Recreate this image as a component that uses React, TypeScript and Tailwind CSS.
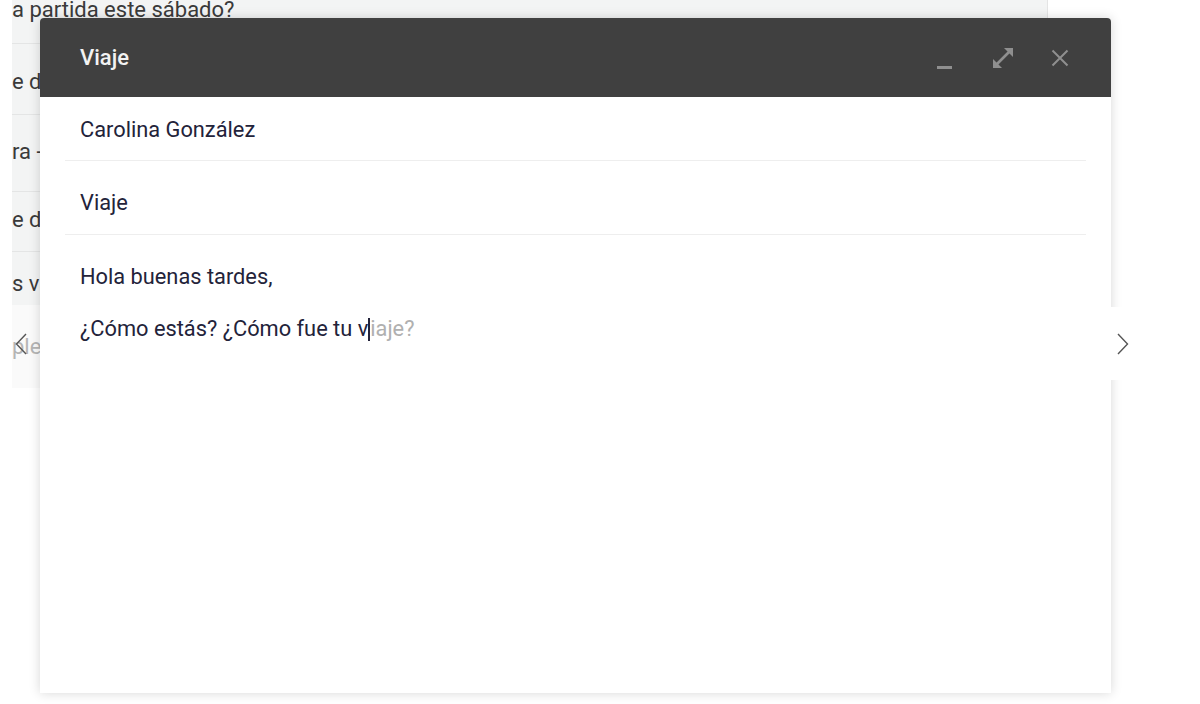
import React from 'react';

const rows = [
  { text: 'a partida este sábado?', h: 'h-[44px] items-start', off: '-mt-[3px]' },
  { text: 'e de la reunión', h: 'h-[71px] items-center', off: 'mt-[6px]' },
  { text: 'ra - informe', h: 'h-[77px] items-center', off: '-mt-[3px]' },
  { text: 'e de compras', h: 'h-[60px] items-center', off: '-mt-[3px]' },
  { text: 's vacaciones', h: 'h-[53px] items-center border-b-0', off: 'mt-[10px]' },
];

const Chevron = ({ dir }: { dir: 'left' | 'right' }) => (
  <svg width="12" height="22" viewBox="0 0 12 22" fill="none" stroke="#555" strokeWidth="1.4">
    {dir === 'left' ? <polyline points="11,1 1.5,11 11,21" /> : <polyline points="1,1 10.5,11 1,21" />}
  </svg>
);

export default function App() {
  return (
    <div className="relative h-[704px] w-[1200px] overflow-hidden bg-white font-['Roboto',sans-serif]">
      {/* inbox behind the compose window */}
      <div className="ml-[12px] w-[1036px] border-r border-[#e4e4e4] bg-[#f3f4f4]">
        {rows.map((r, i) => (
          <div key={i} className={`flex border-b border-[#e4e5e5] text-[22px] leading-[26px] text-[#3a3a3a] ${r.h}`}>
            <span className={r.off}>{r.text}</span>
          </div>
        ))}
        <div className="flex h-[83px] items-center bg-[#fafafa] text-[22px] text-[#b5b5b5]">
          <span className="relative">
            ple
            <span className="absolute left-[3px] top-[3px]">
              <Chevron dir="left" />
            </span>
          </span>
        </div>
      </div>

      {/* compose window */}
      <div className="absolute left-[40px] top-[18px] flex h-[675px] w-[1071px] flex-col rounded-t-[4px] bg-white shadow-[0_0_12px_rgba(0,0,0,0.16)]">
        <div className="flex h-[79px] items-center justify-between rounded-t-[4px] bg-[#404040] pl-[40px] pr-[42px]">
          <span className="text-[22px] font-medium text-[#f2f2f2]">Viaje</span>
          <div className="flex items-center">
            <div className="mt-[20px] h-[3px] w-[15px] bg-[#8f8f8f]" />
            <svg className="ml-[39px]" width="24" height="24" viewBox="0 0 24 24" fill="none" stroke="#8f8f8f" strokeWidth="2.6">
              <path d="M5 19 L19 5" />
              <path d="M2 22 L2 13 L11 22 Z" fill="#8f8f8f" stroke="none" />
              <path d="M22 2 L22 11 L13 2 Z" fill="#8f8f8f" stroke="none" />
            </svg>
            <svg className="ml-[36px]" width="18" height="18" viewBox="0 0 18 18" fill="none" stroke="#8f8f8f" strokeWidth="2">
              <path d="M1.5 1.5 L16.5 16.5 M16.5 1.5 L1.5 16.5" />
            </svg>
          </div>
        </div>
        <div className="px-[25px] text-[21.8px] leading-[26px] text-[#23233a]">
          <div className="flex h-[64px] items-center border-b border-[#eeeeee] pl-[15px] pt-[2px]">
            Carolina González
          </div>
          <div className="flex h-[74px] items-center border-b border-[#eeeeee] pl-[15px] pt-[10px]">
            Viaje
          </div>
          <div className="pl-[15px] pt-[29px]">
            <div>Hola buenas tardes,</div>
            <div className="mt-[26px] flex items-center">
              <span>¿Cómo estás? ¿Cómo fue tu v</span>
              <span className="h-[23px] w-[2px] bg-[#23233a]" />
              <span className="text-[#b0b0b0]">iaje?</span>
            </div>
          </div>
        </div>
      </div>

      {/* white patch on the shadow with the next arrow */}
      <div className="absolute left-[1111px] top-[307px] flex h-[73px] w-[14px] items-center bg-white">
        <div className="ml-[6px]">
          <Chevron dir="right" />
        </div>
      </div>
    </div>
  );
}
